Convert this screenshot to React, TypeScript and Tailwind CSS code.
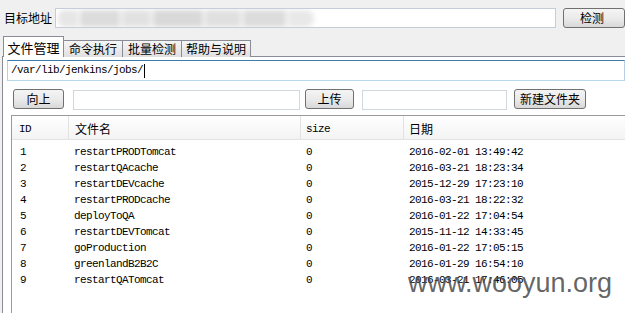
import React from "react";

const rows = [
  ["1", "restartPRODTomcat", "0", "2016-02-01 13:49:42"],
  ["2", "restartQAcache", "0", "2016-03-21 18:23:34"],
  ["3", "restartDEVcache", "0", "2015-12-29 17:23:10"],
  ["4", "restartPRODcache", "0", "2016-03-21 18:22:32"],
  ["5", "deployToQA", "0", "2016-01-22 17:04:54"],
  ["6", "restartDEVTomcat", "0", "2015-11-12 14:33:45"],
  ["7", "goProduction", "0", "2016-01-22 17:05:15"],
  ["8", "greenlandB2B2C", "0", "2016-01-29 16:54:10"],
  ["9", "restartQATomcat", "0", "2016-03-21 17:46:05"],
];

const mono = "font-['Liberation_Mono','Noto_Sans_CJK_SC',monospace] text-[11px] tracking-[-0.6px]";
const cjk = "font-['Noto_Sans_CJK_SC','Noto_Sans',sans-serif] text-[12px]";

function Btn({ w, label, align = "justify-center" }: { w: string; label: string; align?: string }) {
  return (
    <div
      className={`${w} h-[20px] shrink-0 rounded-[3px] border border-[#707070] bg-gradient-to-b from-[#f4f4f4] via-[#ebebeb] to-[#d8d8d8] flex items-center ${align} ${cjk} text-black leading-none`}
    >
      {label}
    </div>
  );
}

export default function App() {
  return (
    <div className="relative w-[625px] h-[313px] overflow-hidden bg-[#f0f0f0] text-black">
      {/* top row */}
      <div className="flex items-center pt-[7px] h-[29px]">
        <div className={`w-[72px] pl-[4px] ${cjk} leading-none`}>目标地址</div>
        <div className="relative w-[501px] h-[20px] shrink-0 border border-[#c5cdd8] bg-white overflow-hidden">
          <div className="absolute left-[2px] top-[1px] w-[256px] h-[17px] flex gap-[2px] blur-[2.5px]">
            <div className="w-[20px] h-full bg-[#e6e6e6] rounded-l-[6px]" />
            <div className="w-[40px] h-full bg-[#dcdcdc]" />
            <div className="w-[30px] h-full bg-[#e2e2e2]" />
            <div className="w-[50px] h-full bg-[#d9d9d9]" />
            <div className="w-[36px] h-full bg-[#e0e0e0]" />
            <div className="w-[44px] h-full bg-[#dcdcdc]" />
            <div className="w-[26px] h-full bg-[#e8e8e8] rounded-r-[8px]" />
          </div>
        </div>
        <div className="ml-[7px]">
          <Btn w="w-[62px]" label="检测" align="justify-start pl-[16px]" />
        </div>
      </div>

      {/* tabs */}
      <div className="flex items-end pl-[3px] h-[28px] -mb-px relative z-10">
        <div className={`w-[61px] h-[21px] bg-white border border-b-0 border-[#898c95] flex items-center justify-center ${cjk} text-[13px] leading-none`}>
          文件管理
        </div>
        {["命令执行", "批量检测", "帮助与说明"].map((t, i) => (
          <div
            key={t}
            className={`${i === 2 ? "w-[70px]" : "w-[60px]"} h-[17px] -ml-px border border-b-0 border-[#898c95] bg-gradient-to-b from-[#f5f5f5] to-[#e0e0e0] flex items-center justify-center ${cjk} leading-none`}
          >
            {t}
          </div>
        ))}
      </div>

      {/* panel */}
      <div className="ml-[2px] h-[257px] bg-white border-l border-t border-[#898c95] flex flex-col">
        <div className="ml-[4px] mt-[3px] h-[21px] border border-[#b5cfe7] border-t-[#3d7bad] border-b-[#b7d9ed] flex items-center pl-[3px]">
          <span className={`${mono} leading-none`}>/var/lib/jenkins/jobs/</span>
          <span className="w-px h-[14px] bg-black ml-[1px]" />
        </div>

        <div className="flex items-center mt-[7px] ml-[10px] h-[21px]">
          <Btn w="w-[51px]" label="向上" />
          <div className="ml-[9px] w-[227px] h-[20px] mt-[2px] border border-[#d2d8e0] bg-white" />
          <div className="ml-[5px]">
            <Btn w="w-[49px]" label="上传" />
          </div>
          <div className="ml-[8px] w-[145px] h-[20px] mt-[2px] border border-[#d2d8e0] bg-white" />
          <div className="ml-[7px]">
            <Btn w="w-[72px]" label="新建文件夹" />
          </div>
        </div>

        {/* table */}
        <div className="ml-[8px] mt-[6px] flex-1 border-l border-t border-[#9a9a9a] bg-white">
          <div className="grid grid-cols-[56px_232px_103px_1fr] h-[24px] bg-gradient-to-b from-white to-[#f3f3f3] border-b border-[#e2e2e2]">
            <div className={`pl-[7px] pt-[3px] flex items-center ${mono}`}>ID</div>
            <div className={`pl-[6px] pt-[3px] flex items-center border-l border-[#e2e2e2] ${cjk} leading-none`}>文件名</div>
            <div className={`pl-[5px] pt-[3px] flex items-center border-l border-[#e2e2e2] ${mono}`}>size</div>
            <div className={`pl-[5px] pt-[3px] flex items-center border-l border-[#e2e2e2] ${cjk} leading-none`}>日期</div>
          </div>
          <div className="pt-[4px]">
            {rows.map((r) => (
              <div key={r[0]} className={`grid grid-cols-[56px_232px_103px_1fr] h-[16px] items-center ${mono} leading-none`}>
                <div className="pl-[8px]">{r[0]}</div>
                <div className="pl-[6px]">{r[1]}</div>
                <div className="pl-[6px]">{r[2]}</div>
                <div className="pl-[6px]">{r[3]}</div>
              </div>
            ))}
          </div>
        </div>
      </div>

      {/* watermark */}
      <div className="absolute left-[408px] top-[270px] font-['Liberation_Sans',Arial,sans-serif] text-[27px] leading-none text-[#4a4a4a]/85 pointer-events-none">
        www.wooyun.org
      </div>
    </div>
  );
}
